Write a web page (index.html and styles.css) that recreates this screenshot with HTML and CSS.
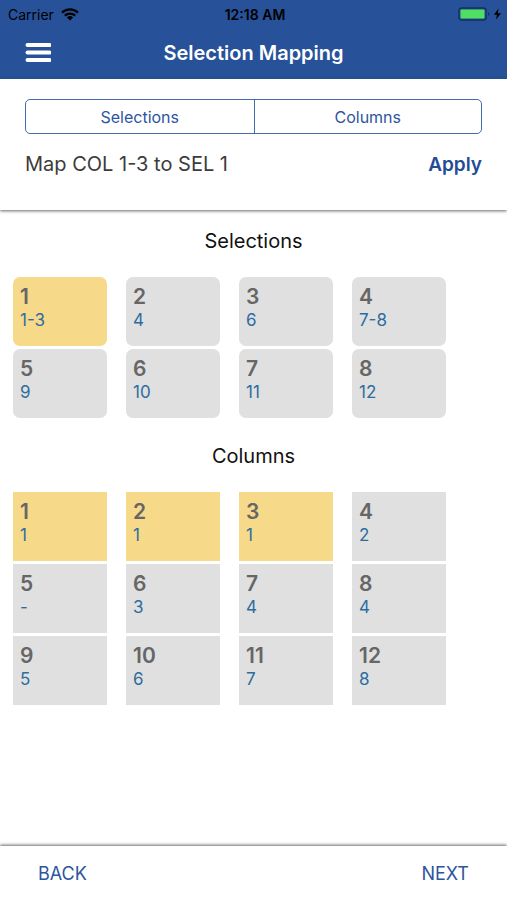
FILE: index.html
```html
<!DOCTYPE html>
<html lang="en">
<head>
<meta charset="utf-8">
<meta name="viewport" content="width=device-width, initial-scale=1">
<title>Selection Mapping</title>
<link rel="stylesheet" href="styles.css">
</head>
<body>
<header class="header">
  <div class="status">
    <div class="carrier">Carrier
      <svg class="wifi" viewBox="0 0 18 13" aria-hidden="true"><path d="M1 4.6a11.6 11.6 0 0 1 16 0M3.8 7.6a7.6 7.6 0 0 1 10.4 0" fill="none" stroke="#000" stroke-width="2.3"/><path d="M9 12.6 5.9 9.5a4.5 4.5 0 0 1 6.2 0z"/></svg>
    </div>
    <div class="time">12:18 AM</div>
    <svg class="battery" viewBox="0 0 44 14" aria-hidden="true"><rect x="1" y="1" width="27" height="12" rx="2.5" fill="none" stroke="#16315f" stroke-width="1.4"/><rect x="2.5" y="2.5" width="24" height="9" rx="1" fill="#4fdf62"/><path d="M30 5q3 2 0 4z" fill="#16315f"/><path d="M40.5 1.5 36 7.7h3l-1 4.8 5-6.3h-3.2z"/></svg>
  </div>
  <div class="bar">
    <button class="menu" type="button" aria-label="Menu">
      <svg viewBox="0 0 26 20" aria-hidden="true"><path d="M2.5 2h22M2.5 9.5h22M2.5 17h22" stroke="#fff" stroke-width="4" stroke-linecap="round"/></svg>
    </button>
    <h1>Selection Mapping</h1>
  </div>
</header>
<section class="panel">
  <div class="segments">
    <button type="button">Selections</button>
    <button type="button">Columns</button>
  </div>
  <div class="mapping">
    <p>Map COL 1-3 to SEL 1</p>
    <button class="apply" type="button">Apply</button>
  </div>
</section>
<main>
  <h2>Selections</h2>
  <div class="grid rounded">
    <button class="cell active" type="button"><b>1</b><span>1-3</span></button>
    <button class="cell" type="button"><b>2</b><span>4</span></button>
    <button class="cell" type="button"><b>3</b><span>6</span></button>
    <button class="cell" type="button"><b>4</b><span>7-8</span></button>
    <button class="cell" type="button"><b>5</b><span>9</span></button>
    <button class="cell" type="button"><b>6</b><span>10</span></button>
    <button class="cell" type="button"><b>7</b><span>11</span></button>
    <button class="cell" type="button"><b>8</b><span>12</span></button>
  </div>
  <h2>Columns</h2>
  <div class="grid">
    <button class="cell active" type="button"><b>1</b><span>1</span></button>
    <button class="cell active" type="button"><b>2</b><span>1</span></button>
    <button class="cell active" type="button"><b>3</b><span>1</span></button>
    <button class="cell" type="button"><b>4</b><span>2</span></button>
    <button class="cell" type="button"><b>5</b><span>-</span></button>
    <button class="cell" type="button"><b>6</b><span>3</span></button>
    <button class="cell" type="button"><b>7</b><span>4</span></button>
    <button class="cell" type="button"><b>8</b><span>4</span></button>
    <button class="cell" type="button"><b>9</b><span>5</span></button>
    <button class="cell" type="button"><b>10</b><span>6</span></button>
    <button class="cell" type="button"><b>11</b><span>7</span></button>
    <button class="cell" type="button"><b>12</b><span>8</span></button>
  </div>
</main>
<footer class="footer">
  <button type="button">BACK</button>
  <button type="button">NEXT</button>
</footer>
</body>
</html>
```
FILE: styles.css
```css
* {
  box-sizing: border-box;
}

body {
  margin: 0;
  min-height: 100vh;
  display: flex;
  flex-direction: column;
  background: #fff;
  color: #111;
  font-family: Inter, "Liberation Sans", sans-serif;
}

button {
  margin: 0;
  padding: 0;
  border: 0;
  background: none;
  color: #2c55a0;
  font: inherit;
  cursor: pointer;
}

h1,
h2,
p {
  margin: 0;
}

.header {
  background: #275198;
  border-bottom: 1px solid #2f5596;
}

.status {
  display: grid;
  grid-template-columns: 1fr auto 1fr;
  align-items: center;
  height: 28px;
  padding: 0 5px 0 8px;
  color: #000;
  font-size: 14px;
}

.carrier {
  display: flex;
  align-items: center;
  gap: 7px;
}

.wifi {
  width: 18px;
  height: 13px;
}

.time {
  font-weight: 600;
}

.battery {
  width: 44px;
  height: 14px;
  justify-self: end;
}

.bar {
  display: grid;
  grid-template-columns: 26px 1fr 26px;
  align-items: center;
  height: 50px;
  padding: 0 25px;
}

.menu svg {
  display: block;
  width: 26px;
  height: 20px;
}

h1 {
  color: #fff;
  font-size: 20px;
  font-weight: 600;
  text-align: center;
}

.panel {
  height: 131px;
  padding: 20px 25px 0;
  box-shadow: 0 1px 3px rgba(0, 0, 0, 0.6);
}

.segments {
  display: grid;
  grid-template-columns: 1fr 1fr;
  height: 35px;
  border: 1px solid #446bb0;
  border-radius: 5px;
  font-size: 16px;
}

.segments button + button {
  border-left: 1px solid #446bb0;
}

.mapping {
  display: flex;
  align-items: center;
  justify-content: space-between;
  height: 60px;
  color: #3c3c3c;
  font-size: 20px;
}

.apply {
  font-size: 19px;
  font-weight: 600;
  color: #234c93;
}

main {
  flex: 1;
}

h2 {
  padding: 18px 0 23px;
  font-size: 20px;
  line-height: 26px;
  font-weight: 400;
  text-align: center;
}

.grid {
  display: grid;
  grid-template-columns: repeat(4, 1fr);
  gap: 3px 19px;
  padding: 0 61px 7px 13px;
}

.cell {
  display: flex;
  flex-direction: column;
  height: 69px;
  padding: 8px 7px;
  background: #e0e0e0;
  text-align: left;
}

.rounded .cell {
  border-radius: 7px;
}

.cell.active {
  background: #f7d98a;
}

.cell b {
  color: #666;
  font-size: 21px;
  line-height: 24px;
  font-weight: 600;
}

.cell span {
  color: #2e6c9e;
  font-size: 17px;
  line-height: 22px;
}

.footer {
  display: flex;
  align-items: center;
  justify-content: space-between;
  height: 54px;
  padding: 0 38px;
  box-shadow: 0 -1px 3px rgba(0, 0, 0, 0.6);
  font-size: 18px;
}
```
